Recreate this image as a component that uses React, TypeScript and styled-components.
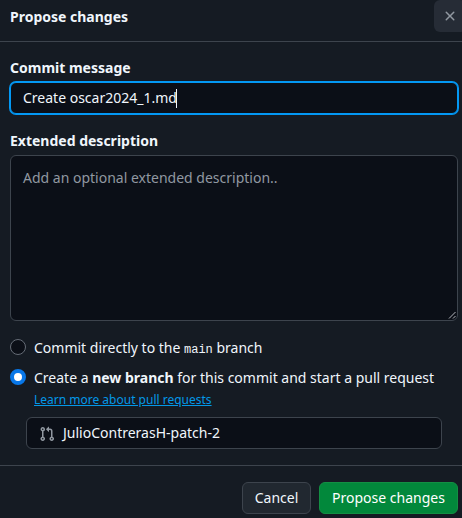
import React from "react";
import styled, { createGlobalStyle } from "styled-components";

const GlobalStyle = createGlobalStyle`
  *, *::before, *::after { box-sizing: border-box; }
  body {
    margin: 0;
    background: #151b23;
    color: #f0f6fc;
    font: 400 14px/21px "Noto Sans", sans-serif;
    overflow: hidden;
  }
`;

const Dialog = styled.section`
  display: flex;
  flex-direction: column;
  width: 462px;
  height: 518px;
  background: #151b23;
`;

const Header = styled.header`
  display: flex;
  justify-content: space-between;
  height: 42px;
  flex: none;
  padding-left: 10px;
  border-bottom: 1px solid #3d444d;
`;

const Title = styled.h1`
  margin: 6px 0 0;
  font-size: 14px;
  font-weight: 700;
  line-height: 21px;
`;

const CloseButton = styled.button`
  display: flex;
  align-items: center;
  justify-content: center;
  width: 32px;
  height: 32px;
  margin-right: -4px;
  padding: 0;
  border: 0;
  border-radius: 6px;
  background: #262c36;
  color: #9198a1;
`;

const Body = styled.div`
  display: flex;
  flex-direction: column;
  height: 424px;
  flex: none;
  padding: 15px 4px 0 10px;
  border-bottom: 1px solid #3d444d;
`;

const Label = styled.label`
  height: 21px;
  margin-bottom: 4px;
  font-weight: 700;
`;

const Field = styled.div<{ $focused?: boolean }>`
  display: flex;
  align-items: center;
  height: 32px;
  flex: none;
  padding: 0 12px;
  border: 1px solid ${(p) => (p.$focused ? "#0398f4" : "#3d444d")};
  border-radius: 6px;
  background: #0b0f17;
  line-height: 20px;
  box-shadow: ${(p) => (p.$focused ? "0 0 0 1px #0398f4" : "none")};
`;

const MessageField = styled(Field)`
  margin-bottom: 16px;
`;

const BranchField = styled(Field)`
  width: 416px;
  margin: 8px 0 0 16px;
  gap: 8px;
`;

const Caret = styled.span`
  width: 1px;
  height: 19px;
  margin-left: -1px;
  background: #f0f6fc;
`;

const DescriptionWrap = styled.div`
  position: relative;
  height: 166px;
  flex: none;
  margin-bottom: 16px;
`;

const Description = styled.textarea`
  display: block;
  width: 100%;
  height: 100%;
  padding: 11px 12px;
  border: 1px solid #3d444d;
  border-radius: 6px;
  outline: 0;
  resize: none;
  background: #0b0f17;
  color: #f0f6fc;
  font: inherit;
  &::placeholder { color: #9198a1; opacity: 1; }
`;

const Grip = styled.svg`
  position: absolute;
  right: 1px;
  bottom: 1px;
`;

const Choice = styled.label`
  display: flex;
  height: 21px;
  flex: none;
  gap: 8px;
  white-space: pre;
  & + & { margin-top: 9px; }
`;

const Radio = styled.input`
  appearance: none;
  width: 16px;
  height: 16px;
  margin: 2px 0 0;
  flex: none;
  border: 1px solid #656c76;
  border-radius: 50%;
  background: #0b0f17;
  &:checked {
    border: 4px solid #0877e8;
    background: #fff;
  }
`;

const BranchName = styled.code`
  font: 12px "Liberation Mono", monospace;
`;

const Strong = styled.strong`
  font-weight: 700;
`;

const HelpLink = styled.a`
  align-self: flex-start;
  height: 18px;
  margin: 3px 0 0 24px;
  color: #0398e8;
  font-size: 12px;
  line-height: 18px;
  text-decoration: underline;
`;

const PullIcon = styled.svg`
  flex: none;
  position: relative;
  top: 1px;
  fill: #9198a1;
`;

const Footer = styled.footer`
  display: flex;
  justify-content: flex-end;
  gap: 8px;
  padding: 16px 4px 4px;
`;

const Button = styled.button<{ $primary?: boolean }>`
  width: ${(p) => (p.$primary ? "139px" : "69px")};
  height: 32px;
  padding: 0;
  border: 1px solid ${(p) => (p.$primary ? "#138f43" : "#3d444d")};
  border-radius: 6px;
  background: ${(p) => (p.$primary ? "#02883b" : "#212830")};
  color: ${(p) => (p.$primary ? "#fff" : "#f0f6fc")};
  font: inherit;
  line-height: 20px;
`;

export default function App() {
  return (
    <>
      <GlobalStyle />
      <Dialog>
        <Header>
          <Title>Propose changes</Title>
          <CloseButton aria-label="Close">
            <svg width="16" height="16" viewBox="0 0 16 16" fill="currentColor">
              <path d="M3.72 3.72a.75.75 0 0 1 1.06 0L8 6.94l3.22-3.22a.75.75 0 1 1 1.06 1.06L9.06 8l3.22 3.22a.75.75 0 1 1-1.06 1.06L8 9.06l-3.22 3.22a.75.75 0 0 1-1.06-1.06L6.94 8 3.72 4.78a.75.75 0 0 1 0-1.06Z" />
            </svg>
          </CloseButton>
        </Header>
        <Body>
          <Label>Commit message</Label>
          <MessageField $focused>
            <span>Create oscar2024_1.md</span>
            <Caret />
          </MessageField>
          <Label htmlFor="description">Extended description</Label>
          <DescriptionWrap>
            <Description id="description" placeholder="Add an optional extended description.." />
            <Grip width="9" height="9" viewBox="0 0 9 9" stroke="#c8cbd0" strokeWidth="0.9">
              <path d="M1 7.5 7.5 1M5 7.5 7.5 5" />
            </Grip>
          </DescriptionWrap>
          <Choice>
            <Radio type="radio" name="target" />
            <span>Commit directly to the <BranchName>main</BranchName> branch</span>
          </Choice>
          <Choice>
            <Radio type="radio" name="target" defaultChecked />
            <span>Create a <Strong>new branch</Strong> for this commit and start a pull request</span>
          </Choice>
          <HelpLink>Learn more about pull requests</HelpLink>
          <BranchField>
            <PullIcon width="16" height="16" viewBox="0 0 16 16">
              <path d="M1.5 3.25a2.25 2.25 0 1 1 3 2.122v5.256a2.251 2.251 0 1 1-1.5 0V5.372A2.25 2.25 0 0 1 1.5 3.25Zm5.677-.177L9.573.677A.25.25 0 0 1 10 .854V2.5h1A2.5 2.5 0 0 1 13.5 5v5.628a2.251 2.251 0 1 1-1.5 0V5a1 1 0 0 0-1-1h-1v1.646a.25.25 0 0 1-.427.177L7.177 3.427a.25.25 0 0 1 0-.354ZM3.75 2.5a.75.75 0 1 0 0 1.5.75.75 0 0 0 0-1.5Zm0 9.5a.75.75 0 1 0 0 1.5.75.75 0 0 0 0-1.5Zm8.25.75a.75.75 0 1 0 1.5 0 .75.75 0 0 0-1.5 0Z" />
            </PullIcon>
            <span>JulioContrerasH-patch-2</span>
          </BranchField>
        </Body>
        <Footer>
          <Button>Cancel</Button>
          <Button $primary>Propose changes</Button>
        </Footer>
      </Dialog>
    </>
  );
}
